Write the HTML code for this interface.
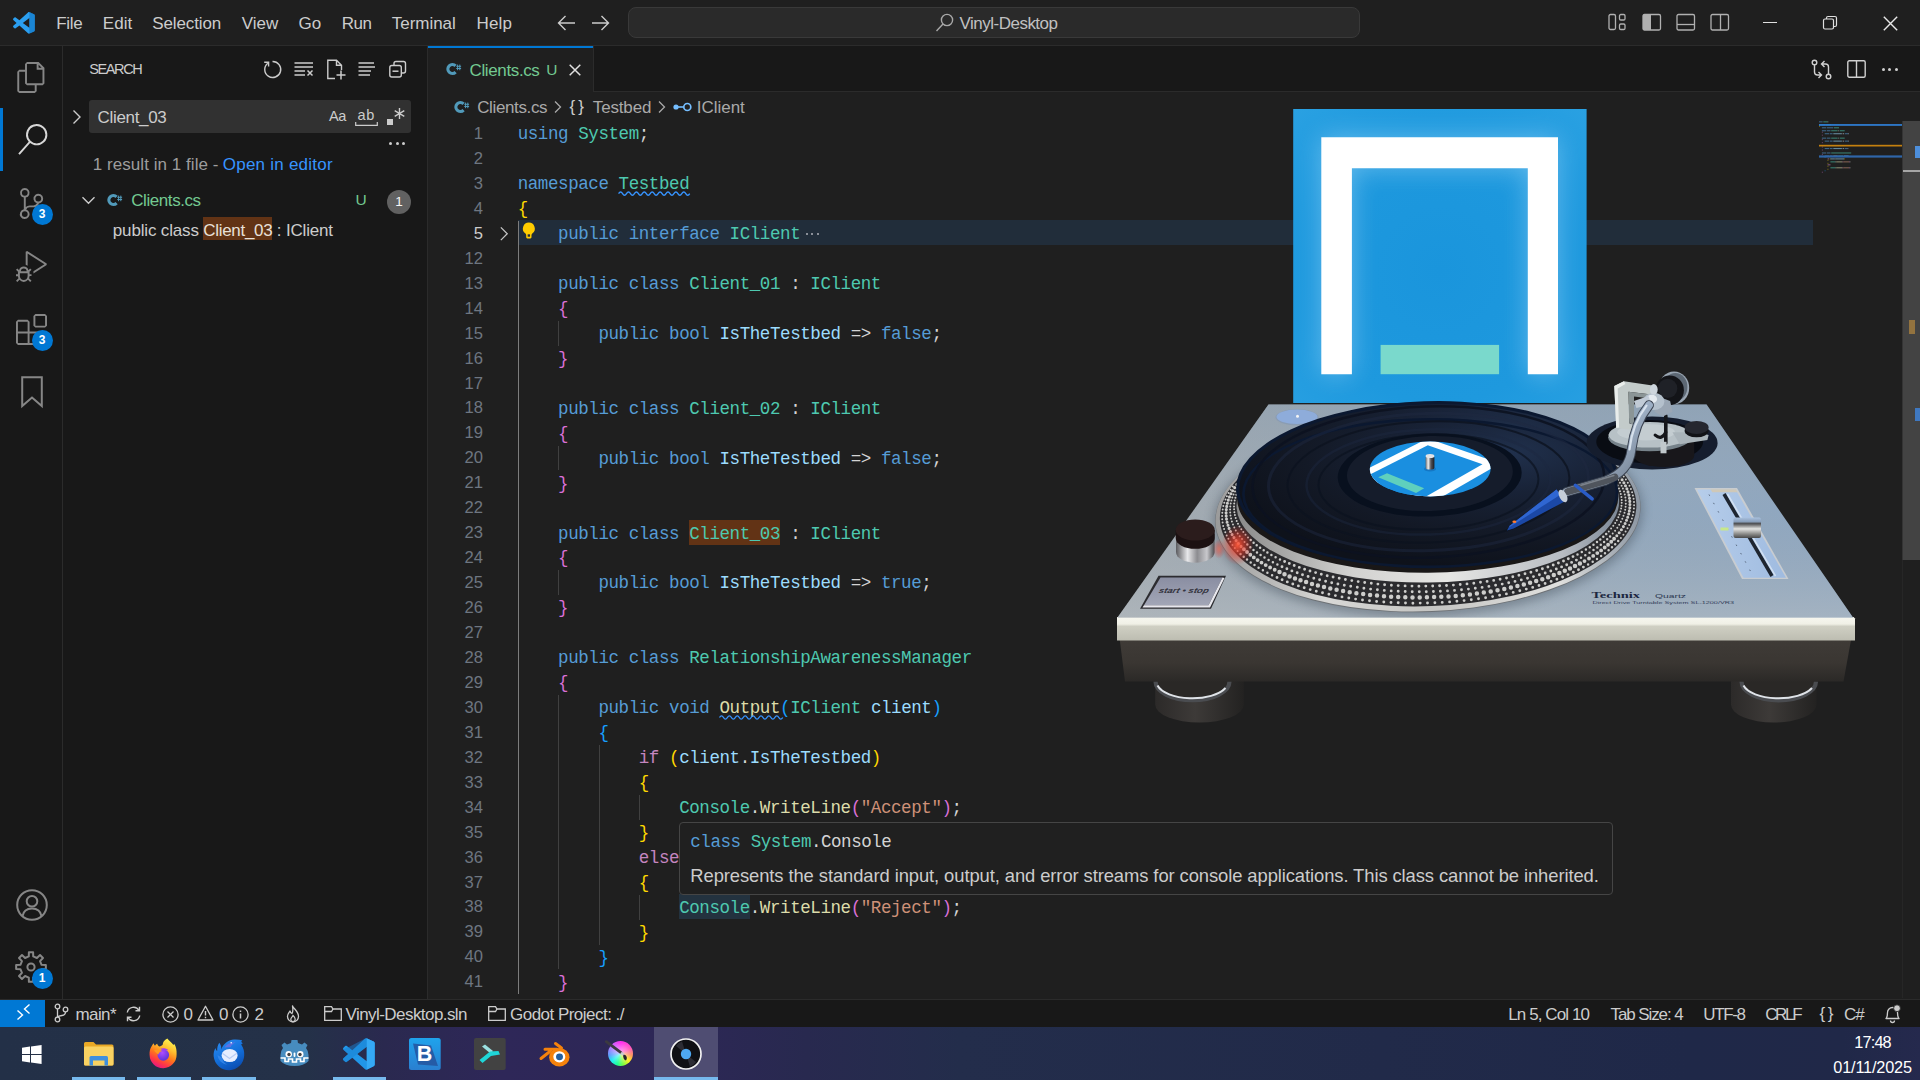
<!DOCTYPE html>
<html><head><meta charset="utf-8"><title>Clients.cs - Vinyl-Desktop</title>
<style>
html,body{margin:0;padding:0;width:1920px;height:1080px;overflow:hidden;background:#1f1f1f;font-family:"Liberation Sans",sans-serif;color:#cccccc;}
.a{position:absolute;}
.t{position:absolute;white-space:pre;line-height:1;}
svg{position:absolute;overflow:visible;}
.cl{position:absolute;left:0;white-space:pre;font-family:"Liberation Mono",monospace;font-size:17.5px;line-height:25px;height:25px;letter-spacing:-0.412px;color:#d4d4d4;}
.ln{position:absolute;left:440px;width:43px;text-align:right;font-size:16.6px;line-height:25px;height:25px;color:#6e7681;}
.k{color:#569cd6}.c{color:#c586c0}.y{color:#4ec9b0}.f{color:#dcdcaa}.v{color:#9cdcfe}.s{color:#ce9178}
.b1{color:#ffd700}.b2{color:#da70d6}.b3{color:#179fff}

</style></head>
<body>
<div class="a" style="left:0px;top:0px;width:1920px;height:46px;background:#1f1f1f;"></div>
<div class="a" style="left:0px;top:45px;width:1920px;height:1px;background:#2b2b2b;"></div>
<div class="a" style="left:0px;top:46px;width:63px;height:953px;background:#181818;"></div>
<div class="a" style="left:62px;top:46px;width:1px;height:953px;background:#2b2b2b;"></div>
<div class="a" style="left:63px;top:46px;width:365px;height:953px;background:#181818;"></div>
<div class="a" style="left:427px;top:46px;width:1px;height:953px;background:#2b2b2b;"></div>
<div class="a" style="left:428px;top:46px;width:1492px;height:45px;background:#181818;"></div>
<div class="a" style="left:428px;top:91px;width:1492px;height:1px;background:#2b2b2b;"></div>
<div class="a" style="left:428px;top:46px;width:165px;height:46px;background:#1f1f1f;"></div>
<div class="a" style="left:428px;top:46px;width:165px;height:1.5px;background:#0078d4;"></div>
<div class="a" style="left:593px;top:46px;width:1px;height:46px;background:#2b2b2b;"></div>
<svg class="a" style="left:12.6px;top:11.6px" width="21.8" height="21.8" viewBox="0 0 100 100" ><path fill-rule="evenodd" fill="#2b9ff0" d="M96.5 10.8 75.9.9C73.5-.3 70.7.2 68.8 2.1L29.4 38 12.2 25c-1.6-1.2-3.8-1.1-5.3.2l-5.5 5c-1.8 1.7-1.8 4.5 0 6.200L16.300 50 1.400 63.600c-1.800 1.700-1.800 4.500 0 6.200l5.500 5c1.500 1.300 3.700 1.400 5.300.200L29.400 62l39.400 35.900c1.900 1.900 4.700 2.400 7.100 1.200l20.600-9.900c2.100-1 3.500-3.200 3.500-5.600V16.400c0-2.400-1.400-4.600-3.500-5.600ZM75 72.700 45.100 50 75 27.300Z"/><path fill="#0d6fbd" opacity=".55" d="M75 27.300V0.500c2 0 20 9 21.500 10.300 2.100 1 3.500 3.200 3.500 5.600v67.200c0 2.400-1.400 4.600-3.500 5.600L75.900 99.100c-.3.150-.6.250-.9.350Z"/></svg>
<svg class="a" style="left:556.5px;top:14px" width="20" height="18" viewBox="0 0 20 18" ><path d="M1.500 9H18M8.500 2 1.500 9l7 7" fill="none" stroke="#cccccc" stroke-width="1.400"/></svg>
<svg class="a" style="left:590px;top:14px" width="20" height="18" viewBox="0 0 20 18" ><path d="M2 9H18.500M11.500 2l7 7-7 7" fill="none" stroke="#cccccc" stroke-width="1.400"/></svg>
<div class="a" style="left:628px;top:7px;width:729.500px;height:28.800px;background:#2a2a2a;border:1.200px solid #393939;border-radius:8px"></div>
<svg class="a" style="left:935px;top:12px" width="20" height="20" viewBox="0 0 20 20" ><circle cx="12" cy="8" r="5.600" fill="none" stroke="#a8a8a8" stroke-width="1.400"/><path d="M8 12 1.500 19" stroke="#a8a8a8" stroke-width="1.400"/></svg>
<svg class="a" style="left:1608px;top:12.2px" width="20" height="20" viewBox="0 0 20 20" ><rect x="1" y="2.500" width="6.500" height="15" rx="1.500" fill="none" stroke="#b0b0b0" stroke-width="1.300"/><rect x="11.500" y="2.500" width="5.500" height="5.500" rx="1.300" fill="none" stroke="#b0b0b0" stroke-width="1.300"/><rect x="11.500" y="12" width="5.500" height="5.500" rx="1.300" fill="none" stroke="#b0b0b0" stroke-width="1.300"/></svg>
<svg class="a" style="left:1642px;top:12.2px" width="20" height="20" viewBox="0 0 20 20" ><rect x="1" y="2.500" width="17.500" height="15.500" rx="1.500" fill="none" stroke="#b0b0b0" stroke-width="1.300"/><rect x="1" y="2.500" width="8" height="15.500" fill="#b0b0b0"/></svg>
<svg class="a" style="left:1676px;top:12.2px" width="20" height="20" viewBox="0 0 20 20" ><rect x="1" y="2.500" width="17.500" height="15.500" rx="1.500" fill="none" stroke="#b0b0b0" stroke-width="1.300"/><path d="M1 12.500H18.500" stroke="#b0b0b0" stroke-width="1.300"/></svg>
<svg class="a" style="left:1710px;top:12.2px" width="20" height="20" viewBox="0 0 20 20" ><rect x="1" y="2.500" width="17.500" height="15.500" rx="1.500" fill="none" stroke="#b0b0b0" stroke-width="1.300"/><path d="M10.500 2.500V18" stroke="#b0b0b0" stroke-width="1.300"/></svg>
<div class="a" style="left:1763px;top:22px;width:14px;height:1.3px;background:#e0e0e0;"></div>
<svg class="a" style="left:1822px;top:15px" width="16" height="16" viewBox="0 0 16 16" ><rect x="1.500" y="4" width="10" height="10" rx="1.500" fill="none" stroke="#e0e0e0" stroke-width="1.200"/><path d="M4.500 4V3q0-1.500 1.500-1.500h7q1.500 0 1.500 1.500v7q0 1.500-1.500 1.500h-1" fill="none" stroke="#e0e0e0" stroke-width="1.200"/></svg>
<svg class="a" style="left:1882.5px;top:15.5px" width="15" height="15" viewBox="0 0 15 15" ><path d="M.8.8 14.200 14.200M14.200.8.8 14.200" stroke="#e8e8e8" stroke-width="1.400"/></svg>
<svg class="a" style="left:16.0px;top:61.5px" width="31" height="31" viewBox="0 0 24 24" ><path fill="#868686" d="M17.5 0h-9L7 1.500V6H2.500L1 7.500v15.070L2.500 24h12.070L16 22.570V18h4.700l1.300-1.430V4.500L17.500 0zm0 2.120l2.380 2.380H17.500V2.120zm-3 20.380h-12v-15H7v9.070L8.500 18h6v4.500zm6-6h-12v-15H16V6h4.500v10.500z"/></svg>
<div class="a" style="left:0px;top:108px;width:2.6px;height:63px;background:#0078d4;"></div>
<svg class="a" style="left:16.5px;top:124.0px" width="31" height="31" viewBox="0 0 24 24" ><path fill="#d7d7d7" d="M15.250 0a8.250 8.250 0 0 0-6.180 13.720L1 22.880l1.120 1 8.050-9.120A8.251 8.251 0 1 0 15.250.010V0zm0 15a6.750 6.750 0 1 1 0-13.500 6.750 6.750 0 0 1 0 13.500z"/></svg>
<svg class="a" style="left:16.0px;top:187.5px" width="31" height="31" viewBox="0 0 24 24" ><path fill="#868686" d="M21.007 8.222A3.738 3.738 0 0 0 15.045 5.200a3.737 3.737 0 0 0 1.156 6.583 2.988 2.988 0 0 1-2.668 1.670h-2.990a4.456 4.456 0 0 0-2.989 1.165V7.400a3.737 3.737 0 1 0-1.494 0v9.117a3.776 3.776 0 1 0 1.816.099 2.990 2.990 0 0 1 2.668-1.667h2.990a4.484 4.484 0 0 0 4.223-3.039 3.736 3.736 0 0 0 3.250-3.687zM4.565 3.738a2.242 2.242 0 1 1 4.484 0 2.242 2.242 0 0 1-4.484 0zm4.484 16.441a2.242 2.242 0 1 1-4.484 0 2.242 2.242 0 0 1 4.484 0zm8.221-9.715a2.242 2.242 0 1 1 0-4.485 2.242 2.242 0 0 1 0 4.485z"/></svg>
<svg class="a" style="left:16.0px;top:250.5px" width="31" height="31" viewBox="0 0 24 24" ><path fill="#868686" d="M10.940 13.500l-1.320 1.320a3.730 3.730 0 0 0-7.240 0L1.060 13.500 0 14.560l1.720 1.720-.220.220V18H0v1.500h1.500v.080c.077.489.214.966.410 1.420L0 22.940 1.060 24l1.650-1.650A4.308 4.308 0 0 0 6 24a4.310 4.310 0 0 0 3.290-1.650L10.940 24 12 22.940 10.090 21c.198-.464.336-.951.410-1.450v-.100H12V18h-1.500v-1.500l-.220-.220L12 14.560l-1.060-1.060zM6 13.500a2.250 2.250 0 0 1 2.250 2.250h-4.500A2.250 2.250 0 0 1 6 13.500zm3 6a3.330 3.330 0 0 1-3 3 3.330 3.330 0 0 1-3-3v-2.250h6v2.250zm14.760-9.900v1.260L13.500 17.370V15.600l8.500-5.370L9 2v9.460a5.070 5.070 0 0 0-1.500-.720V.630L8.640 0l15.120 9.600z"/></svg>
<svg class="a" style="left:16.0px;top:314.0px" width="31" height="31" viewBox="0 0 24 24" ><path fill="#868686" d="M13.500 1.500L15 0h7.500L24 1.500V9l-1.500 1.500H15L13.500 9V1.500zm1.500 0V9h7.500V1.500H15zM0 15V6l1.500-1.500H9L10.500 6v7.500H18l1.500 1.500v7.500L18 24H1.500L0 22.500V15zm9-1.500V6H1.500v7.500H9zM9 15H1.500v7.500H9V15zm1.500 7.500H18V15h-7.500v7.500z"/></svg>
<svg class="a" style="left:20.5px;top:376px" width="22" height="32" viewBox="0 0 22 32" ><path d="M1.200 1.200H20.800V30L11 21.500 1.200 30Z" fill="none" stroke="#868686" stroke-width="2" stroke-linejoin="miter"/></svg>
<div class="a" style="left:31.5px;top:203.5px;width:21.0px;height:21.0px;border-radius:50%;background:#0078d4;color:#fff;font-size:12px;font-weight:700;text-align:center;line-height:21.0px">3</div>
<div class="a" style="left:31.5px;top:329.5px;width:21.0px;height:21.0px;border-radius:50%;background:#0078d4;color:#fff;font-size:12px;font-weight:700;text-align:center;line-height:21.0px">3</div>
<svg class="a" style="left:15.5px;top:888.5px" width="32" height="32" viewBox="0 0 32 32" ><circle cx="16" cy="16" r="14.800" fill="none" stroke="#868686" stroke-width="2"/><circle cx="16" cy="12.300" r="5.300" fill="none" stroke="#868686" stroke-width="2"/><path d="M6.500 27.200C7.500 21.500 11 19.500 16 19.500S24.500 21.500 25.500 27.200" fill="none" stroke="#868686" stroke-width="2"/></svg>
<svg class="a" style="left:15px;top:951px" width="32" height="32" viewBox="0 0 32 32" ><path d="M13.79 5.43L13.90 1.15L18.10 1.15L18.21 5.43L21.91 6.96L25.02 4.02L27.98 6.98L25.04 10.09L26.57 13.79L30.85 13.90L30.85 18.10L26.57 18.21L25.04 21.91L27.98 25.02L25.02 27.98L21.91 25.04L18.21 26.57L18.10 30.85L13.90 30.85L13.79 26.57L10.09 25.04L6.98 27.98L4.02 25.02L6.96 21.91L5.43 18.21L1.15 18.10L1.15 13.90L5.43 13.79L6.96 10.09L4.02 6.98L6.98 4.02L10.09 6.96Z" fill="none" stroke="#868686" stroke-width="2" stroke-linejoin="round"/><circle cx="16" cy="16" r="3.600" fill="none" stroke="#868686" stroke-width="2"/></svg>
<div class="a" style="left:31.5px;top:967.5px;width:21.0px;height:21.0px;border-radius:50%;background:#0078d4;color:#fff;font-size:12px;font-weight:700;text-align:center;line-height:21.0px">1</div>
<svg class="a" style="left:262px;top:59px" width="21" height="21" viewBox="0 0 21 21" ><path d="M5.800 4.200A8 8 0 1 0 10.500 2.500" fill="none" stroke="#cccccc" stroke-width="1.400"/><path d="M2.200 3.200H6.600V7.600" fill="none" stroke="#cccccc" stroke-width="1.400"/></svg>
<svg class="a" style="left:293px;top:59px" width="21" height="21" viewBox="0 0 21 21" ><path d="M1.500 4H20M1.500 8H20M1.500 12H12M1.500 16H12" stroke="#cccccc" stroke-width="1.500"/><path d="M14.500 11.500 19.500 16.500M19.500 11.500 14.500 16.500" stroke="#cccccc" stroke-width="1.500"/></svg>
<svg class="a" style="left:326px;top:59px" width="21" height="21" viewBox="0 0 21 21" ><path d="M9 19.500H1.800V1.200H10.500L15.500 6.200V11M10.500 1.200V6.200H15.500" fill="none" stroke="#cccccc" stroke-width="1.400"/><path d="M10.500 16H19.500M15 11.500V20.500" stroke="#cccccc" stroke-width="1.500"/></svg>
<svg class="a" style="left:357px;top:59px" width="21" height="21" viewBox="0 0 21 21" ><path d="M1.500 4H17M1.500 8H18M1.500 12H14M1.500 16H13" stroke="#cccccc" stroke-width="1.500"/></svg>
<svg class="a" style="left:388px;top:59px" width="21" height="21" viewBox="0 0 21 21" ><rect x="1.800" y="6.500" width="11.500" height="11.500" rx="2" fill="none" stroke="#cccccc" stroke-width="1.400"/><path d="M6 6.500V4.500q0-2 2-2h7.500q2 0 2 2v7.500q0 2-2 2H13.500" fill="none" stroke="#cccccc" stroke-width="1.400"/><path d="M4.500 12.200H10.500" stroke="#cccccc" stroke-width="1.500"/></svg>
<svg class="a" style="left:71px;top:108px" width="12" height="18" viewBox="0 0 12 18" ><path d="M2.500 2.500 9 9 2.500 15.500" fill="none" stroke="#cccccc" stroke-width="1.400"/></svg>
<div class="a" style="left:89px;top:100px;width:322px;height:33px;background:#313131;border-radius:3px"></div>
<svg class="a" style="left:355px;top:121.5px" width="23" height="4" viewBox="0 0 23 4" ><path d="M.7 0V3.300H22.300V0" fill="none" stroke="#cccccc" stroke-width="1.200"/></svg>
<div class="a" style="left:387px;top:119px;width:5.5px;height:5.5px;background:#cccccc;"></div>
<svg class="a" style="left:393.5px;top:108px" width="11" height="11" viewBox="0 0 11 11" ><path d="M5.500 0V11M.700 2.700 10.300 8.300M10.300 2.700.700 8.300" stroke="#cccccc" stroke-width="1.400"/></svg>
<div class="a" style="left:389.1px;top:141.7px;width:3px;height:3px;border-radius:50%;background:#cccccc"></div>
<div class="a" style="left:395.5px;top:141.7px;width:3px;height:3px;border-radius:50%;background:#cccccc"></div>
<div class="a" style="left:402.0px;top:141.7px;width:3px;height:3px;border-radius:50%;background:#cccccc"></div>
<svg class="a" style="left:81px;top:193px" width="15" height="15" viewBox="0 0 15 15" ><path d="M1.500 4.200 7.500 10.200 13.500 4.200" fill="none" stroke="#cccccc" stroke-width="1.400"/></svg>
<svg class="a" style="left:107.2px;top:192.5px" width="15.500" height="14" viewBox="0 0 15.500 14"><path d="M9.600 3.900A4.500 4.500 0 1 0 9.600 10.100" fill="none" stroke="#519aba" stroke-width="3.100"/><path d="M11.600 2.600v5.600M13.800 2.600v5.600M10.300 4.300h4.800M10.300 6.500h4.800" stroke="#519aba" stroke-width="1"/></svg>
<div class="a" style="left:387px;top:189.500px;width:24px;height:24px;border-radius:50%;background:#616161;color:#f8f8f8;font-size:13.500px;text-align:center;line-height:24px">1</div>
<div class="a" style="left:203.3px;top:217px;width:69px;height:23px;background:#623315;"></div>
<svg class="a" style="left:445.7px;top:62.3px" width="15.500" height="14" viewBox="0 0 15.500 14"><path d="M9.600 3.900A4.500 4.500 0 1 0 9.600 10.100" fill="none" stroke="#519aba" stroke-width="3.100"/><path d="M11.600 2.600v5.600M13.800 2.600v5.600M10.300 4.300h4.800M10.300 6.500h4.800" stroke="#519aba" stroke-width="1"/></svg>
<svg class="a" style="left:569px;top:63.5px" width="12" height="12" viewBox="0 0 12 12" ><path d="M.7.7 11.300 11.300M11.300.7.7 11.300" stroke="#e0e0e0" stroke-width="1.500"/></svg>
<svg class="a" style="left:1811px;top:58px" width="22" height="22" viewBox="0 0 22 22" ><circle cx="3.500" cy="4.500" r="2.300" fill="none" stroke="#d0d0d0" stroke-width="1.400"/><circle cx="17.500" cy="18.500" r="2.300" fill="none" stroke="#d0d0d0" stroke-width="1.400"/><path d="M3.500 7V14q0 3 3 3H10M7.500 14 10.500 17 7.500 20M17.500 16V9q0-3-3-3H11M13.500 3 10.500 6 13.500 9" fill="none" stroke="#d0d0d0" stroke-width="1.400"/></svg>
<svg class="a" style="left:1847px;top:60px" width="19" height="18" viewBox="0 0 19 18" ><rect x=".8" y=".8" width="17.400" height="16.400" rx="1.500" fill="none" stroke="#d0d0d0" stroke-width="1.400"/><path d="M9.500 .8V17.200" stroke="#d0d0d0" stroke-width="1.400"/></svg>
<div class="a" style="left:1881.5px;top:67.5px;width:3px;height:3px;border-radius:50%;background:#d0d0d0"></div>
<div class="a" style="left:1888.2px;top:67.5px;width:3px;height:3px;border-radius:50%;background:#d0d0d0"></div>
<div class="a" style="left:1894.8px;top:67.5px;width:3px;height:3px;border-radius:50%;background:#d0d0d0"></div>
<svg class="a" style="left:454.2px;top:99.5px" width="15.500" height="14" viewBox="0 0 15.500 14"><path d="M9.600 3.900A4.500 4.500 0 1 0 9.600 10.100" fill="none" stroke="#519aba" stroke-width="3.100"/><path d="M11.600 2.600v5.600M13.800 2.600v5.600M10.300 4.300h4.800M10.300 6.500h4.800" stroke="#519aba" stroke-width="1"/></svg>
<svg class="a" style="left:553px;top:100px" width="10" height="14" viewBox="0 0 10 14" ><path d="M2 1.500 7.500 7 2 12.500" fill="none" stroke="#a9a9a9" stroke-width="1.300"/></svg>
<svg class="a" style="left:657px;top:100px" width="10" height="14" viewBox="0 0 10 14" ><path d="M2 1.500 7.500 7 2 12.500" fill="none" stroke="#a9a9a9" stroke-width="1.300"/></svg>
<svg class="a" style="left:673px;top:100.5px" width="19" height="12" viewBox="0 0 19 12" ><circle cx="3" cy="6" r="2.600" fill="#75beff"/><path d="M5 6H11" stroke="#75beff" stroke-width="1.600"/><circle cx="14.300" cy="6" r="3.500" fill="none" stroke="#75beff" stroke-width="1.700"/></svg>
<div class="a" style="left:518px;top:220.1px;width:1295px;height:25.2px;background:#212d3a;"></div>
<div class="a" style="left:689.23px;top:520.2px;width:90.81px;height:25px;background:#623315;"></div>
<div class="a" style="left:679.1400000000001px;top:894.4499999999999px;width:70.63px;height:25px;background:#23323f;"></div>
<div class="a" style="left:517.9px;top:221.1px;width:1.6px;height:773.4px;background:#7c7c7c;"></div>
<div class="a" style="left:558.3px;top:320.9px;width:1px;height:24.9px;background:#404040;"></div>
<div class="a" style="left:558.3px;top:445.6px;width:1px;height:24.9px;background:#404040;"></div>
<div class="a" style="left:558.3px;top:570.4px;width:1px;height:24.9px;background:#404040;"></div>
<div class="a" style="left:558.3px;top:695.1px;width:1px;height:274.4px;background:#404040;"></div>
<div class="a" style="left:598.6px;top:745.0px;width:1px;height:199.6px;background:#404040;"></div>
<div class="a" style="left:639.0px;top:794.9px;width:1px;height:24.9px;background:#404040;"></div>
<div class="a" style="left:639.0px;top:894.7px;width:1px;height:24.9px;background:#404040;"></div>
<div class="ln" style="top:121.00px;">1</div>
<div class="cl" style="left:517.7px;top:122.30px"><span class="k">using</span> <span class="y">System</span>;</div>
<div class="ln" style="top:145.95px;">2</div>
<div class="ln" style="top:170.90px;">3</div>
<div class="cl" style="left:517.7px;top:172.20px"><span class="k">namespace</span> <span class="y">Testbed</span></div>
<div class="ln" style="top:195.85px;">4</div>
<div class="cl" style="left:517.7px;top:197.15px"><span class="b1">{</span></div>
<div class="ln" style="top:220.80px;color:#cccccc;">5</div>
<div class="cl" style="left:517.7px;top:222.10px">    <span class="k">public</span> <span class="k">interface</span> <span class="y">IClient</span></div>
<div class="ln" style="top:245.75px;">12</div>
<div class="ln" style="top:270.70px;">13</div>
<div class="cl" style="left:517.7px;top:272.00px">    <span class="k">public</span> <span class="k">class</span> <span class="y">Client_01</span> : <span class="y">IClient</span></div>
<div class="ln" style="top:295.65px;">14</div>
<div class="cl" style="left:517.7px;top:296.95px">    <span class="b2">{</span></div>
<div class="ln" style="top:320.60px;">15</div>
<div class="cl" style="left:517.7px;top:321.90px">        <span class="k">public</span> <span class="k">bool</span> <span class="v">IsTheTestbed</span> =&gt; <span class="k">false</span>;</div>
<div class="ln" style="top:345.55px;">16</div>
<div class="cl" style="left:517.7px;top:346.85px">    <span class="b2">}</span></div>
<div class="ln" style="top:370.50px;">17</div>
<div class="ln" style="top:395.45px;">18</div>
<div class="cl" style="left:517.7px;top:396.75px">    <span class="k">public</span> <span class="k">class</span> <span class="y">Client_02</span> : <span class="y">IClient</span></div>
<div class="ln" style="top:420.40px;">19</div>
<div class="cl" style="left:517.7px;top:421.70px">    <span class="b2">{</span></div>
<div class="ln" style="top:445.35px;">20</div>
<div class="cl" style="left:517.7px;top:446.65px">        <span class="k">public</span> <span class="k">bool</span> <span class="v">IsTheTestbed</span> =&gt; <span class="k">false</span>;</div>
<div class="ln" style="top:470.30px;">21</div>
<div class="cl" style="left:517.7px;top:471.60px">    <span class="b2">}</span></div>
<div class="ln" style="top:495.25px;">22</div>
<div class="ln" style="top:520.20px;">23</div>
<div class="cl" style="left:517.7px;top:521.50px">    <span class="k">public</span> <span class="k">class</span> <span class="y">Client_03</span> : <span class="y">IClient</span></div>
<div class="ln" style="top:545.15px;">24</div>
<div class="cl" style="left:517.7px;top:546.45px">    <span class="b2">{</span></div>
<div class="ln" style="top:570.10px;">25</div>
<div class="cl" style="left:517.7px;top:571.40px">        <span class="k">public</span> <span class="k">bool</span> <span class="v">IsTheTestbed</span> =&gt; <span class="k">true</span>;</div>
<div class="ln" style="top:595.05px;">26</div>
<div class="cl" style="left:517.7px;top:596.35px">    <span class="b2">}</span></div>
<div class="ln" style="top:620.00px;">27</div>
<div class="ln" style="top:644.95px;">28</div>
<div class="cl" style="left:517.7px;top:646.25px">    <span class="k">public</span> <span class="k">class</span> <span class="y">RelationshipAwarenessManager</span></div>
<div class="ln" style="top:669.90px;">29</div>
<div class="cl" style="left:517.7px;top:671.20px">    <span class="b2">{</span></div>
<div class="ln" style="top:694.85px;">30</div>
<div class="cl" style="left:517.7px;top:696.15px">        <span class="k">public</span> <span class="k">void</span> <span class="f">Output</span><span class="b3">(</span><span class="y">IClient</span> <span class="v">client</span><span class="b3">)</span></div>
<div class="ln" style="top:719.80px;">31</div>
<div class="cl" style="left:517.7px;top:721.10px">        <span class="b3">{</span></div>
<div class="ln" style="top:744.75px;">32</div>
<div class="cl" style="left:517.7px;top:746.05px">            <span class="c">if</span> <span class="b1">(</span><span class="v">client</span>.<span class="v">IsTheTestbed</span><span class="b1">)</span></div>
<div class="ln" style="top:769.70px;">33</div>
<div class="cl" style="left:517.7px;top:771.00px">            <span class="b1">{</span></div>
<div class="ln" style="top:794.65px;">34</div>
<div class="cl" style="left:517.7px;top:795.95px">                <span class="y">Console</span>.<span class="f">WriteLine</span><span class="b2">(</span><span class="s">&quot;Accept&quot;</span><span class="b2">)</span>;</div>
<div class="ln" style="top:819.60px;">35</div>
<div class="cl" style="left:517.7px;top:820.90px">            <span class="b1">}</span></div>
<div class="ln" style="top:844.55px;">36</div>
<div class="cl" style="left:517.7px;top:845.85px">            <span class="c">else</span></div>
<div class="ln" style="top:869.50px;">37</div>
<div class="cl" style="left:517.7px;top:870.80px">            <span class="b1">{</span></div>
<div class="ln" style="top:894.45px;">38</div>
<div class="cl" style="left:517.7px;top:895.75px">                <span class="y">Console</span>.<span class="f">WriteLine</span><span class="b2">(</span><span class="s">&quot;Reject&quot;</span><span class="b2">)</span>;</div>
<div class="ln" style="top:919.40px;">39</div>
<div class="cl" style="left:517.7px;top:920.70px">            <span class="b1">}</span></div>
<div class="ln" style="top:944.35px;">40</div>
<div class="cl" style="left:517.7px;top:945.65px">        <span class="b3">}</span></div>
<div class="ln" style="top:969.30px;">41</div>
<div class="cl" style="left:517.7px;top:970.60px">    <span class="b2">}</span></div>
<svg class="a" style="left:498.5px;top:226px" width="11" height="15.5" viewBox="0 0 12 17" ><path d="M2 1.500 9 8.500 2 15.500" fill="none" stroke="#c5c5c5" stroke-width="1.400"/></svg>
<svg class="a" style="left:522px;top:222px" width="13.7" height="17" viewBox="0 0 15 18" ><path d="M7.500 .3a6.600 6.600 0 0 0-4 11.800c.8.700 1.100 1.300 1.100 2.200v2.200q0 1.200 1.200 1.200h3.400q1.200 0 1.200-1.200v-2.200c0-.9.300-1.500 1.100-2.200a6.600 6.600 0 0 0-4-11.800z" fill="#ffcc00"/><rect x="6.200" y="13.200" width="2.600" height="2.600" fill="#212d3a"/></svg>
<div class="a" style="left:805.5px;top:233px;width:2px;height:2px;background:#8a8f98"></div>
<div class="a" style="left:811px;top:233px;width:2px;height:2px;background:#8a8f98"></div>
<div class="a" style="left:816.5px;top:233px;width:2px;height:2px;background:#8a8f98"></div>
<svg class="a" style="left:0;top:0" width="1920" height="1080"><path d="M618.6 193.6Q620.6 190.4 622.6 193.6Q624.5 196.8 626.5 193.6Q628.5 190.4 630.5 193.6Q632.4 196.8 634.4 193.6Q636.4 190.4 638.4 193.6Q640.3 196.8 642.3 193.6Q644.3 190.4 646.3 193.6Q648.2 196.8 650.2 193.6Q652.2 190.4 654.2 193.6Q656.1 196.8 658.1 193.6Q660.1 190.4 662.1 193.6Q664.0 196.8 666.0 193.6Q668.0 190.4 670.0 193.6Q671.9 196.8 673.9 193.6Q675.9 190.4 677.9 193.6Q679.8 196.8 681.8 193.6Q683.8 190.4 685.8 193.6Q687.7 196.8 689.7 193.6" fill="none" stroke="#3794ff" stroke-width="1.400"/></svg>
<svg class="a" style="left:0;top:0" width="1920" height="1080"><path d="M719.5 717.5Q721.5 714.3 723.5 717.5Q725.4 720.8 727.4 717.5Q729.4 714.3 731.4 717.5Q733.3 720.8 735.3 717.5Q737.3 714.3 739.3 717.5Q741.2 720.8 743.2 717.5Q745.2 714.3 747.2 717.5Q749.1 720.8 751.1 717.5Q753.1 714.3 755.1 717.5Q757.0 720.8 759.0 717.5Q761.0 714.3 763.0 717.5Q764.9 720.8 766.9 717.5Q768.9 714.3 770.9 717.5Q772.8 720.8 774.8 717.5Q776.8 714.3 778.8 717.5Q780.7 720.8 782.7 717.5" fill="none" stroke="#3794ff" stroke-width="1.400"/></svg>
<div class="a" style="left:678.500px;top:822px;width:932px;height:70.500px;background:#202020;border:1px solid #454545;border-radius:4px"></div>
<div class="cl" style="left:690.3px;top:829.500px;letter-spacing:-0.450px"><span class="k">class</span> <span class="y">System</span>.Console</div>
<svg class="a" style="left:0;top:0" width="1920" height="1080"><g opacity=".55"><rect x="1819.0" y="121.30" width="3.6" height="1.1" fill="#569cd6"/><rect x="1823.3" y="121.30" width="4.3" height="1.1" fill="#4ec9b0"/><rect x="1827.6" y="121.30" width="0.7" height="1.1" fill="#d4d4d4"/><rect x="1819.0" y="124.26" width="6.4" height="1.1" fill="#569cd6"/><rect x="1826.2" y="124.26" width="5.0" height="1.1" fill="#4ec9b0"/><rect x="1819.0" y="125.75" width="0.7" height="1.1" fill="#ffd700"/><rect x="1821.9" y="127.23" width="4.3" height="1.1" fill="#569cd6"/><rect x="1826.9" y="127.23" width="6.4" height="1.1" fill="#569cd6"/><rect x="1834.0" y="127.23" width="5.0" height="1.1" fill="#4ec9b0"/><rect x="1821.9" y="130.19" width="4.3" height="1.1" fill="#569cd6"/><rect x="1826.9" y="130.19" width="3.6" height="1.1" fill="#569cd6"/><rect x="1831.2" y="130.19" width="6.4" height="1.1" fill="#4ec9b0"/><rect x="1838.3" y="130.19" width="0.7" height="1.1" fill="#d4d4d4"/><rect x="1839.7" y="130.19" width="5.0" height="1.1" fill="#4ec9b0"/><rect x="1821.9" y="131.67" width="0.7" height="1.1" fill="#da70d6"/><rect x="1824.7" y="133.16" width="4.3" height="1.1" fill="#569cd6"/><rect x="1829.7" y="133.16" width="2.9" height="1.1" fill="#569cd6"/><rect x="1833.3" y="133.16" width="8.6" height="1.1" fill="#9cdcfe"/><rect x="1842.6" y="133.16" width="1.4" height="1.1" fill="#d4d4d4"/><rect x="1844.7" y="133.16" width="3.6" height="1.1" fill="#569cd6"/><rect x="1848.3" y="133.16" width="0.7" height="1.1" fill="#d4d4d4"/><rect x="1821.9" y="134.64" width="0.7" height="1.1" fill="#da70d6"/><rect x="1821.9" y="137.60" width="4.3" height="1.1" fill="#569cd6"/><rect x="1826.9" y="137.60" width="3.6" height="1.1" fill="#569cd6"/><rect x="1831.2" y="137.60" width="6.4" height="1.1" fill="#4ec9b0"/><rect x="1838.3" y="137.60" width="0.7" height="1.1" fill="#d4d4d4"/><rect x="1839.7" y="137.60" width="5.0" height="1.1" fill="#4ec9b0"/><rect x="1821.9" y="139.08" width="0.7" height="1.1" fill="#da70d6"/><rect x="1824.7" y="140.57" width="4.3" height="1.1" fill="#569cd6"/><rect x="1829.7" y="140.57" width="2.9" height="1.1" fill="#569cd6"/><rect x="1833.3" y="140.57" width="8.6" height="1.1" fill="#9cdcfe"/><rect x="1842.6" y="140.57" width="1.4" height="1.1" fill="#d4d4d4"/><rect x="1844.7" y="140.57" width="3.6" height="1.1" fill="#569cd6"/><rect x="1848.3" y="140.57" width="0.7" height="1.1" fill="#d4d4d4"/><rect x="1821.9" y="142.05" width="0.7" height="1.1" fill="#da70d6"/><rect x="1821.9" y="145.01" width="4.3" height="1.1" fill="#569cd6"/><rect x="1826.9" y="145.01" width="3.6" height="1.1" fill="#569cd6"/><rect x="1831.2" y="145.01" width="6.4" height="1.1" fill="#4ec9b0"/><rect x="1838.3" y="145.01" width="0.7" height="1.1" fill="#d4d4d4"/><rect x="1839.7" y="145.01" width="5.0" height="1.1" fill="#4ec9b0"/><rect x="1821.9" y="146.49" width="0.7" height="1.1" fill="#da70d6"/><rect x="1824.7" y="147.98" width="4.3" height="1.1" fill="#569cd6"/><rect x="1829.7" y="147.98" width="2.9" height="1.1" fill="#569cd6"/><rect x="1833.3" y="147.98" width="8.6" height="1.1" fill="#9cdcfe"/><rect x="1842.6" y="147.98" width="1.4" height="1.1" fill="#d4d4d4"/><rect x="1844.7" y="147.98" width="2.9" height="1.1" fill="#569cd6"/><rect x="1847.6" y="147.98" width="0.7" height="1.1" fill="#d4d4d4"/><rect x="1821.9" y="149.46" width="0.7" height="1.1" fill="#da70d6"/><rect x="1821.9" y="152.42" width="4.3" height="1.1" fill="#569cd6"/><rect x="1826.9" y="152.42" width="3.6" height="1.1" fill="#569cd6"/><rect x="1831.2" y="152.42" width="20.0" height="1.1" fill="#4ec9b0"/><rect x="1821.9" y="153.90" width="0.7" height="1.1" fill="#da70d6"/><rect x="1824.7" y="155.39" width="4.3" height="1.1" fill="#569cd6"/><rect x="1829.7" y="155.39" width="2.9" height="1.1" fill="#569cd6"/><rect x="1833.3" y="155.39" width="4.3" height="1.1" fill="#dcdcaa"/><rect x="1837.6" y="155.39" width="0.7" height="1.1" fill="#179fff"/><rect x="1838.3" y="155.39" width="5.0" height="1.1" fill="#4ec9b0"/><rect x="1844.0" y="155.39" width="4.3" height="1.1" fill="#9cdcfe"/><rect x="1848.3" y="155.39" width="0.7" height="1.1" fill="#179fff"/><rect x="1824.7" y="156.87" width="0.7" height="1.1" fill="#179fff"/><rect x="1827.6" y="158.35" width="1.4" height="1.1" fill="#c586c0"/><rect x="1829.7" y="158.35" width="0.7" height="1.1" fill="#ffd700"/><rect x="1830.4" y="158.35" width="4.3" height="1.1" fill="#9cdcfe"/><rect x="1834.7" y="158.35" width="0.7" height="1.1" fill="#d4d4d4"/><rect x="1835.4" y="158.35" width="8.6" height="1.1" fill="#9cdcfe"/><rect x="1844.0" y="158.35" width="0.7" height="1.1" fill="#ffd700"/><rect x="1827.6" y="159.83" width="0.7" height="1.1" fill="#ffd700"/><rect x="1830.4" y="161.31" width="5.0" height="1.1" fill="#4ec9b0"/><rect x="1835.4" y="161.31" width="0.7" height="1.1" fill="#d4d4d4"/><rect x="1836.2" y="161.31" width="6.4" height="1.1" fill="#dcdcaa"/><rect x="1842.6" y="161.31" width="0.7" height="1.1" fill="#da70d6"/><rect x="1843.3" y="161.31" width="5.7" height="1.1" fill="#ce9178"/><rect x="1849.0" y="161.31" width="0.7" height="1.1" fill="#da70d6"/><rect x="1849.7" y="161.31" width="0.7" height="1.1" fill="#d4d4d4"/><rect x="1827.6" y="162.80" width="0.7" height="1.1" fill="#ffd700"/><rect x="1827.6" y="164.28" width="2.9" height="1.1" fill="#c586c0"/><rect x="1827.6" y="165.76" width="0.7" height="1.1" fill="#ffd700"/><rect x="1830.4" y="167.24" width="5.0" height="1.1" fill="#4ec9b0"/><rect x="1835.4" y="167.24" width="0.7" height="1.1" fill="#d4d4d4"/><rect x="1836.2" y="167.24" width="6.4" height="1.1" fill="#dcdcaa"/><rect x="1842.6" y="167.24" width="0.7" height="1.1" fill="#da70d6"/><rect x="1843.3" y="167.24" width="5.7" height="1.1" fill="#ce9178"/><rect x="1849.0" y="167.24" width="0.7" height="1.1" fill="#da70d6"/><rect x="1849.7" y="167.24" width="0.7" height="1.1" fill="#d4d4d4"/><rect x="1827.6" y="168.72" width="0.7" height="1.1" fill="#ffd700"/><rect x="1824.7" y="170.21" width="0.7" height="1.1" fill="#179fff"/><rect x="1821.9" y="171.69" width="0.7" height="1.1" fill="#da70d6"/></g><rect x="1819" y="124.1" width="84" height="1.700" fill="#2f7fd6"/><rect x="1819" y="144.8" width="84" height="1.700" fill="#c4800f"/><rect x="1819" y="155.4" width="84" height="2.200" fill="#2f65a8"/></svg>
<div class="a" style="left:1902px;top:121px;width:18px;height:439px;background:#434343;"></div>
<div class="a" style="left:1902px;top:121px;width:1px;height:877px;background:#2b2b2b;opacity:.6"></div>
<div class="a" style="left:1915px;top:145.5px;width:5px;height:12px;background:#4d8fdc;"></div>
<div class="a" style="left:1903px;top:169.7px;width:17px;height:2px;background:#a6a6a6;"></div>
<div class="a" style="left:1908.5px;top:319.5px;width:6.5px;height:14px;background:#93733f;"></div>
<div class="a" style="left:1915px;top:407.5px;width:5px;height:13px;background:#3f78c0;"></div>
<svg class="a" style="left:0;top:0" width="1920" height="1080" viewBox="0 0 1920 1080"><defs>
<radialGradient id="alb" cx="50%" cy="55%" r="75%"><stop offset="0" stop-color="#1a95dc"/><stop offset=".6" stop-color="#1e99de"/><stop offset="1" stop-color="#2aa1e2"/></radialGradient>
<linearGradient id="deck" x1="0" y1="0" x2="1" y2="0"><stop offset="0" stop-color="#a5abb0"/><stop offset=".3" stop-color="#9ba8b4"/><stop offset=".7" stop-color="#92a7bc"/><stop offset="1" stop-color="#8fa7c1"/></linearGradient>
<linearGradient id="deckv" x1="0" y1="0" x2="0" y2="1"><stop offset="0" stop-color="#8fa0b0" stop-opacity=".55"/><stop offset=".5" stop-color="#9aa8b4" stop-opacity="0"/><stop offset="1" stop-color="#b4bcc2" stop-opacity=".55"/></linearGradient>
<linearGradient id="lip" x1="0" y1="0" x2="0" y2="1"><stop offset="0" stop-color="#f7f7f0"/><stop offset=".3" stop-color="#f0f0e6"/><stop offset=".4" stop-color="#cfcfc3"/><stop offset="1" stop-color="#bdbdb1"/></linearGradient>
<linearGradient id="base" x1="0" y1="0" x2="0" y2="1"><stop offset="0" stop-color="#3f3b37"/><stop offset=".55" stop-color="#3a3632"/><stop offset="1" stop-color="#2b2927"/></linearGradient>
<linearGradient id="rim" x1="0" y1="0" x2="1" y2="0"><stop offset="0" stop-color="#9a9a9a"/><stop offset=".25" stop-color="#d8d8d6"/><stop offset=".5" stop-color="#c4c4c2"/><stop offset=".8" stop-color="#e0e0de"/><stop offset="1" stop-color="#8c96a2"/></linearGradient>
<linearGradient id="bev" x1="0" y1="0" x2="1" y2="0"><stop offset="0" stop-color="#8a8a8a"/><stop offset=".3" stop-color="#d2d2d0"/><stop offset=".55" stop-color="#e6e6e4"/><stop offset=".85" stop-color="#b8bcc2"/><stop offset="1" stop-color="#7c8896"/></linearGradient>
<radialGradient id="vin" cx="72%" cy="22%" r="80%"><stop offset="0" stop-color="#20304c"/><stop offset=".35" stop-color="#182236"/><stop offset=".7" stop-color="#131926"/><stop offset="1" stop-color="#0e121b"/></radialGradient>
<radialGradient id="glow" cx="50%" cy="50%" r="50%"><stop offset="0" stop-color="#ff5a3c" stop-opacity=".95"/><stop offset=".45" stop-color="#f03a28" stop-opacity=".55"/><stop offset="1" stop-color="#e02a20" stop-opacity="0"/></radialGradient>
<linearGradient id="metal" x1="0" y1="0" x2="1" y2="0"><stop offset="0" stop-color="#5a5a5e"/><stop offset=".3" stop-color="#e8e8ea"/><stop offset=".55" stop-color="#8c8c90"/><stop offset=".8" stop-color="#c8c8cc"/><stop offset="1" stop-color="#4c4c50"/></linearGradient>
<linearGradient id="arm" x1="0" y1="0" x2="1" y2="1"><stop offset="0" stop-color="#ccd8e6"/><stop offset=".45" stop-color="#a3b5cb"/><stop offset=".8" stop-color="#7c8a9c"/><stop offset="1" stop-color="#50565f"/></linearGradient>
<linearGradient id="foot" x1="0" y1="0" x2="1" y2="0"><stop offset="0" stop-color="#2c2a29"/><stop offset=".45" stop-color="#3d3a38"/><stop offset="1" stop-color="#232221"/></linearGradient>
<linearGradient id="pitch" x1="0" y1="0" x2="1" y2="0"><stop offset="0" stop-color="#b6cdea"/><stop offset="1" stop-color="#9fbbe0"/></linearGradient>
<linearGradient id="spin" x1="0" y1="0" x2="1" y2="0"><stop offset="0" stop-color="#6a6a6c"/><stop offset=".3" stop-color="#f0f0f0"/><stop offset=".6" stop-color="#55555a"/><stop offset="1" stop-color="#1c1c20"/></linearGradient>
<filter id="blur8" x="-20%" y="-20%" width="140%" height="140%"><feGaussianBlur stdDeviation="13"/></filter>
<filter id="blur5" x="-10%" y="-10%" width="120%" height="130%"><feGaussianBlur stdDeviation="5"/></filter>
<linearGradient id="knobv" x1="0" y1="0" x2="0" y2="1"><stop offset="0" stop-color="#a9c0de"/><stop offset=".2" stop-color="#8aa0bc"/><stop offset=".3" stop-color="#4e4e50"/><stop offset=".55" stop-color="#e4e4e2"/><stop offset=".8" stop-color="#8c8c8a"/><stop offset="1" stop-color="#4a4a4a"/></linearGradient>
<linearGradient id="btn" x1="0" y1="0" x2="0" y2="1"><stop offset="0" stop-color="#8a8ea2"/><stop offset="1" stop-color="#a2a6b6"/></linearGradient>
<clipPath id="deckclip"><path d="M1268.500 404.500H1706.500L1853 617.500H1117.500Z"/></clipPath>
<clipPath id="albclip"><rect x="1293.200" y="109" width="293.400" height="294"/></clipPath>
<clipPath id="lblclip"><ellipse cx="1430.200" cy="468.900" rx="60.400" ry="27.500"/></clipPath>
</defs><rect x="1293.200" y="109" width="293.400" height="294" fill="url(#alb)"/><g clip-path="url(#albclip)"><path d="M1321.300 137.200H1558V374.200H1527.800V168.300H1351.900V374.200H1321.300Z" fill="#bfe6ff" opacity=".42" filter="url(#blur8)"/></g><path d="M1321.300 137.200H1558V374.200H1527.800V168.300H1351.900V374.200H1321.300Z" fill="#ffffff"/><rect x="1380.600" y="344.900" width="118.500" height="29.300" fill="#7ad9cc"/><path d="M1155.2 681V704.5A44.299999999999955 18 0 0 0 1243.8 704.500V681Z" fill="url(#foot)"/><path d="M1155.5 681A37.0 18.500 0 0 0 1229.5 681Z" fill="#2a2826"/><path d="M1155.5 681.500A37.0 18.800 0 0 0 1229.5 681.500" fill="none" stroke="#4a4c50" stroke-width="4.200"/><path d="M1157.5 685.500A36.0 17 0 0 0 1225.5 688" fill="none" stroke="#dfe3e8" stroke-width="2"/><path d="M1731 681V704.5A42.75 18 0 0 0 1816.5 704.500V681Z" fill="url(#foot)"/><path d="M1741.5 681A37.25 18.500 0 0 0 1816 681Z" fill="#2a2826"/><path d="M1741.5 681.500A37.25 18.800 0 0 0 1816 681.500" fill="none" stroke="#4a4c50" stroke-width="4.200"/><path d="M1743.5 685.500A36.25 17 0 0 0 1812 688" fill="none" stroke="#dfe3e8" stroke-width="2"/><path d="M1119.800 640H1851L1843.500 681.500H1125Z" fill="url(#base)"/><path d="M1117 617H1853.500L1855 618.500V640.400H1117Z" fill="url(#lip)"/><path d="M1268.500 404.500H1706.500L1853 617.500H1117.500Z" fill="url(#deck)"/><path d="M1268.500 404.500H1706.500L1853 617.500H1117.500Z" fill="url(#deckv)"/><ellipse cx="1297" cy="417.300" rx="21.500" ry="8" fill="#7f95b4" opacity=".55"/><ellipse cx="1297" cy="416.800" rx="20.500" ry="7.300" fill="#8eacda"/><circle cx="1297.500" cy="416.300" r="1.500" fill="#f4f4f4"/><path d="M1158.500 575.800H1226L1211 608.800H1140Z" fill="#2c2c30"/><path d="M1160.500 577.500H1222.500L1208.500 605.300H1144Z" fill="url(#btn)"/><path d="M1144 605.300H1208.500L1222.500 577.500L1224.500 578L1210 607.500H1142.500Z" fill="#e8e8ee"/><text x="1183" y="593.500" font-family="Liberation Sans,sans-serif" font-size="7.600" font-style="italic" font-weight="700" fill="#34343e" text-anchor="middle" textLength="50" lengthAdjust="spacingAndGlyphs" transform="skewX(-18) translate(193,0)">start • stop</text><g clip-path="url(#deckclip)"><ellipse cx="1427.93" cy="516.72" rx="215.52" ry="100.37" transform="rotate(-2.43 1427.93 516.72)" fill="#3c4854" filter="url(#blur5)" opacity=".38"/></g><ellipse cx="1427.93" cy="514.22" rx="212.92" ry="97.77" transform="rotate(-2.43 1427.93 514.22)" fill="#6e7276" /><ellipse cx="1427.93" cy="513.72" rx="212.52" ry="97.37" transform="rotate(-2.43 1427.93 513.72)" fill="url(#rim)" /><ellipse cx="1428.13" cy="511.81" rx="208.38" ry="94.32" transform="rotate(-2.13 1428.13 511.81)" fill="#2b2b2e" /><path d="M1573.0 556.6h0M1568.3 558.8h0M1563.5 561.0h0M1558.4 563.0h0M1553.2 565.0h0M1547.9 567.0h0M1542.4 568.8h0M1536.7 570.5h0M1530.9 572.2h0M1525.0 573.8h0M1518.9 575.3h0M1512.8 576.7h0M1506.5 578.0h0M1500.1 579.2h0M1493.7 580.4h0M1487.1 581.4h0M1480.5 582.3h0M1473.8 583.2h0M1467.0 583.9h0M1460.2 584.5h0M1453.4 585.1h0M1446.5 585.5h0M1439.6 585.8h0M1432.7 586.0h0M1425.8 586.1h0M1418.9 586.2h0M1412.0 586.1h0M1405.1 585.9h0M1398.2 585.6h0M1391.4 585.2h0M1384.6 584.7h0M1377.9 584.1h0M1371.3 583.3h0M1364.7 582.5h0M1358.2 581.6h0M1351.8 580.6h0M1345.4 579.5h0M1339.2 578.3h0M1333.1 577.0h0M1327.2 575.7h0M1321.3 574.2h0M1315.6 572.6h0M1310.0 571.0h0M1304.6 569.2h0M1299.3 567.4h0M1294.2 565.5h0M1289.3 563.5h0M1284.6 561.5h0" stroke="#cdcdcb" stroke-width="2.90" stroke-linecap="round" fill="none"/><path d="M1606.2 534.1h0M1603.3 536.8h0M1600.3 539.5h0M1597.0 542.1h0M1593.5 544.7h0M1589.8 547.2h0M1585.9 549.6h0M1581.8 552.0h0M1577.5 554.4h0M1280.0 559.4h0M1275.6 557.2h0M1271.4 554.9h0M1267.4 552.6h0M1263.7 550.2h0M1260.1 547.8h0M1256.7 545.3h0M1253.6 542.7h0M1250.7 540.1h0" stroke="#cdcdcb" stroke-width="2.49" stroke-linecap="round" fill="none"/><path d="M1621.7 502.8h0M1621.5 505.7h0M1621.1 508.6h0M1620.4 511.5h0M1619.4 514.4h0M1618.3 517.3h0M1616.8 520.2h0M1615.2 523.0h0M1613.3 525.8h0M1611.1 528.6h0M1608.8 531.4h0M1248.0 537.5h0M1245.5 534.8h0M1243.3 532.1h0M1241.3 529.3h0M1239.5 526.5h0M1238.0 523.7h0M1236.7 520.9h0M1235.7 518.0h0M1234.9 515.1h0M1234.4 512.2h0M1234.1 509.3h0M1234.0 506.4h0M1234.2 503.5h0M1234.7 500.6h0M1235.4 497.7h0M1236.3 494.8h0M1237.5 491.9h0M1238.9 489.1h0M1240.6 486.2h0M1242.5 483.4h0M1244.6 480.6h0M1610.2 474.4h0M1612.5 477.2h0M1614.4 479.9h0M1616.2 482.7h0M1617.7 485.5h0M1619.0 488.4h0M1620.0 491.2h0M1620.8 494.1h0M1621.4 497.0h0M1621.7 499.9h0" stroke="#cdcdcb" stroke-width="1.97" stroke-linecap="round" fill="none"/><path d="M1576.4 560.1h0M1571.6 562.4h0M1566.7 564.7h0M1561.6 566.9h0M1556.3 569.0h0M1550.8 571.0h0M1545.2 573.0h0M1539.4 574.8h0M1533.5 576.6h0M1527.5 578.3h0M1521.3 579.9h0M1515.0 581.4h0M1508.7 582.8h0M1502.2 584.1h0M1495.6 585.3h0M1488.9 586.4h0M1482.1 587.4h0M1475.3 588.3h0M1468.4 589.1h0M1461.5 589.8h0M1454.5 590.4h0M1447.5 590.9h0M1440.4 591.3h0M1433.4 591.5h0M1426.3 591.7h0M1419.3 591.7h0M1412.2 591.7h0M1405.2 591.5h0M1398.2 591.2h0M1391.2 590.9h0M1384.3 590.4h0M1377.4 589.8h0M1370.6 589.1h0M1363.9 588.3h0M1357.3 587.3h0M1350.7 586.3h0M1344.3 585.2h0M1337.9 584.0h0M1331.7 582.7h0M1325.6 581.3h0M1319.6 579.8h0M1313.8 578.2h0M1308.1 576.5h0M1302.5 574.7h0M1297.2 572.8h0M1291.9 570.9h0M1286.9 568.8h0M1282.0 566.7h0" stroke="#cdcdcb" stroke-width="2.90" stroke-linecap="round" fill="none"/><path d="M1610.1 536.5h0M1607.2 539.3h0M1604.1 542.1h0M1600.8 544.8h0M1597.3 547.5h0M1593.5 550.1h0M1589.5 552.7h0M1585.3 555.2h0M1581.0 557.7h0M1277.4 564.5h0M1272.9 562.3h0M1268.6 559.9h0M1264.5 557.5h0M1260.6 555.1h0M1257.0 552.5h0M1253.5 550.0h0M1250.3 547.3h0M1247.3 544.6h0" stroke="#cdcdcb" stroke-width="2.49" stroke-linecap="round" fill="none"/><path d="M1625.8 503.7h0M1625.6 506.7h0M1625.2 509.8h0M1624.5 512.8h0M1623.5 515.8h0M1622.3 518.8h0M1620.9 521.8h0M1619.2 524.8h0M1617.3 527.8h0M1615.1 530.7h0M1612.7 533.6h0M1244.5 541.9h0M1242.0 539.1h0M1239.7 536.3h0M1237.7 533.4h0M1235.8 530.5h0M1234.3 527.6h0M1233.0 524.6h0M1231.9 521.6h0M1231.1 518.6h0M1230.5 515.6h0M1230.2 512.6h0M1230.1 509.5h0M1230.3 506.5h0M1230.7 503.5h0M1231.4 500.4h0M1232.3 497.4h0M1233.5 494.4h0M1235.0 491.4h0M1236.6 488.4h0M1238.6 485.4h0M1240.7 482.5h0M1613.9 474.1h0M1616.2 477.0h0M1618.2 479.8h0M1620.0 482.7h0M1621.6 485.7h0M1622.9 488.6h0M1624.0 491.6h0M1624.8 494.6h0M1625.4 497.6h0M1625.7 500.6h0" stroke="#cdcdcb" stroke-width="1.97" stroke-linecap="round" fill="none"/><path d="M1579.9 563.6h0M1575.0 566.1h0M1570.0 568.5h0M1564.8 570.8h0M1559.4 573.0h0M1553.8 575.1h0M1548.1 577.2h0M1542.3 579.2h0M1536.2 581.0h0M1530.1 582.8h0M1523.8 584.5h0M1517.4 586.1h0M1510.9 587.6h0M1504.3 589.0h0M1497.5 590.3h0M1490.7 591.5h0M1483.8 592.6h0M1476.9 593.6h0M1469.9 594.4h0M1462.8 595.2h0M1455.7 595.9h0M1448.5 596.4h0M1441.3 596.8h0M1434.1 597.1h0M1426.9 597.3h0M1419.7 597.4h0M1412.5 597.4h0M1405.3 597.3h0M1398.2 597.0h0M1391.1 596.7h0M1384.0 596.2h0M1377.0 595.6h0M1370.1 594.9h0M1363.2 594.1h0M1356.4 593.2h0M1349.7 592.2h0M1343.1 591.0h0M1336.6 589.8h0M1330.3 588.5h0M1324.0 587.0h0M1317.9 585.5h0M1312.0 583.9h0M1306.1 582.1h0M1300.5 580.3h0M1295.0 578.4h0M1289.6 576.4h0M1284.5 574.3h0M1279.5 572.1h0" stroke="#cdcdcb" stroke-width="4.50" stroke-linecap="round" fill="none"/><path d="M1614.1 538.8h0M1611.2 541.7h0M1608.1 544.7h0M1604.7 547.5h0M1601.1 550.4h0M1597.3 553.1h0M1593.2 555.9h0M1589.0 558.5h0M1584.5 561.1h0M1274.7 569.8h0M1270.1 567.5h0M1265.7 565.1h0M1261.5 562.6h0M1257.6 560.1h0M1253.8 557.4h0M1250.3 554.8h0M1247.0 552.0h0M1243.9 549.2h0" stroke="#cdcdcb" stroke-width="3.87" stroke-linecap="round" fill="none"/><path d="M1629.9 504.5h0M1629.8 507.7h0M1629.3 510.9h0M1628.7 514.0h0M1627.7 517.2h0M1626.5 520.3h0M1625.1 523.5h0M1623.4 526.6h0M1621.4 529.7h0M1619.2 532.7h0M1616.8 535.8h0M1241.0 546.4h0M1238.4 543.5h0M1236.1 540.6h0M1234.0 537.6h0M1232.1 534.6h0M1230.5 531.5h0M1229.1 528.4h0M1228.0 525.3h0M1227.1 522.2h0M1226.5 519.1h0M1226.2 515.9h0M1226.1 512.8h0M1226.3 509.6h0M1226.7 506.4h0M1227.4 503.2h0M1228.3 500.1h0M1229.5 496.9h0M1230.9 493.8h0M1232.6 490.7h0M1234.6 487.6h0M1236.8 484.5h0M1617.6 473.8h0M1619.9 476.7h0M1622.1 479.7h0M1623.9 482.7h0M1625.5 485.8h0M1626.9 488.8h0M1628.0 491.9h0M1628.9 495.1h0M1629.5 498.2h0M1629.8 501.4h0" stroke="#cdcdcb" stroke-width="3.06" stroke-linecap="round" fill="none"/><path d="M1583.4 567.1h0M1578.5 569.7h0M1573.4 572.2h0M1568.0 574.6h0M1562.6 577.0h0M1556.9 579.2h0M1551.1 581.4h0M1545.1 583.5h0M1539.0 585.5h0M1532.7 587.4h0M1526.3 589.1h0M1519.8 590.8h0M1513.2 592.4h0M1506.4 593.9h0M1499.6 595.3h0M1492.6 596.6h0M1485.6 597.8h0M1478.5 598.8h0M1471.3 599.8h0M1464.1 600.6h0M1456.9 601.3h0M1449.6 601.9h0M1442.2 602.4h0M1434.9 602.8h0M1427.5 603.0h0M1420.2 603.1h0M1412.9 603.2h0M1405.5 603.0h0M1398.2 602.8h0M1391.0 602.5h0M1383.8 602.0h0M1376.6 601.5h0M1369.5 600.8h0M1362.5 600.0h0M1355.6 599.1h0M1348.8 598.0h0M1342.0 596.9h0M1335.4 595.6h0M1328.9 594.3h0M1322.5 592.8h0M1316.3 591.2h0M1310.2 589.6h0M1304.2 587.8h0M1298.4 585.9h0M1292.8 584.0h0M1287.3 581.9h0M1282.1 579.7h0M1277.0 577.5h0" stroke="#cdcdcb" stroke-width="2.90" stroke-linecap="round" fill="none"/><path d="M1618.2 541.1h0M1615.2 544.2h0M1612.0 547.2h0M1608.6 550.2h0M1605.0 553.2h0M1601.1 556.1h0M1597.0 558.9h0M1592.7 561.7h0M1588.1 564.4h0M1272.1 575.2h0M1267.4 572.8h0M1262.9 570.3h0M1258.6 567.7h0M1254.5 565.1h0M1250.7 562.4h0M1247.0 559.6h0M1243.7 556.8h0M1240.5 553.9h0" stroke="#cdcdcb" stroke-width="2.49" stroke-linecap="round" fill="none"/><path d="M1634.1 505.3h0M1633.9 508.6h0M1633.5 511.9h0M1632.8 515.2h0M1631.9 518.5h0M1630.7 521.8h0M1629.2 525.1h0M1627.5 528.3h0M1625.6 531.6h0M1623.4 534.8h0M1620.9 537.9h0M1237.6 550.9h0M1234.9 547.9h0M1232.5 544.9h0M1230.3 541.8h0M1228.4 538.7h0M1226.7 535.5h0M1225.3 532.3h0M1224.1 529.1h0M1223.2 525.9h0M1222.6 522.6h0M1222.2 519.3h0M1222.1 516.0h0M1222.3 512.7h0M1222.7 509.4h0M1223.3 506.1h0M1224.3 502.8h0M1225.5 499.5h0M1226.9 496.3h0M1228.6 493.0h0M1230.6 489.8h0M1232.8 486.6h0M1621.3 473.4h0M1623.7 476.4h0M1625.9 479.5h0M1627.8 482.7h0M1629.5 485.8h0M1630.9 489.0h0M1632.1 492.2h0M1632.9 495.5h0M1633.6 498.7h0M1634.0 502.0h0" stroke="#cdcdcb" stroke-width="1.97" stroke-linecap="round" fill="none"/><ellipse cx="1237.500" cy="545" rx="16" ry="20" fill="url(#glow)"/><ellipse cx="1427.82" cy="503.35" rx="191.32" ry="79.22" transform="rotate(-0.76 1427.82 503.35)" fill="url(#bev)" /><ellipse cx="1427.70" cy="497.65" rx="190.61" ry="75.10" transform="rotate(-0.33 1427.70 497.65)" fill="#191717" /><ellipse cx="1427.05" cy="483.64" rx="191.09" ry="82.37" transform="rotate(-1.84 1427.05 483.64)" fill="#0b1830" /><ellipse cx="1427.05" cy="483.64" rx="187.89" ry="79.17" transform="rotate(-1.84 1427.05 483.64)" fill="url(#vin)" /><ellipse cx="1430.20" cy="493.05" rx="188.11" ry="75.10" transform="rotate(-0.33 1430.20 493.05)" fill="#0b1830" /><ellipse cx="1430.20" cy="493.05" rx="185.51" ry="72.50" transform="rotate(-0.33 1430.20 493.05)" fill="url(#vin)" /><g transform="rotate(-1.840 1428 484)"><ellipse cx="1428.500" cy="482" rx="176" ry="75.5" fill="none" stroke="#0c1220" stroke-width="2.5" opacity="0.9"/><ellipse cx="1428.500" cy="482" rx="160" ry="68.5" fill="none" stroke="#1d2840" stroke-width="3" opacity="0.5"/><ellipse cx="1428.500" cy="482" rx="141" ry="60.5" fill="none" stroke="#0d131f" stroke-width="2" opacity="0.8"/><ellipse cx="1428.500" cy="482" rx="122" ry="52.5" fill="none" stroke="#1c2740" stroke-width="2.5" opacity="0.45"/><ellipse cx="1428.500" cy="482" rx="110" ry="47.5" fill="none" stroke="#0c1220" stroke-width="2" opacity="0.7"/></g><ellipse cx="1429.700" cy="475" rx="92" ry="41.500" fill="#08101e" transform="rotate(-1.800 1429.700 475)"/><ellipse cx="1429.900" cy="473.500" rx="83" ry="37.500" fill="#151c2b" transform="rotate(-1.800 1429.900 473.500)"/><ellipse cx="1430.200" cy="468.900" rx="60.400" ry="27.500" fill="#1a8fe0"/><g clip-path="url(#lblclip)"><path d="M1354.700 475.300 1427.700 438.400 1500.100 463.500 1432.900 502.100Z" fill="#ffffff"/><path d="M1427.800 445.200 1482.500 464.200 1411 505.100H1360V479.600Z" fill="#1a8fe0"/><path d="M1378.200 477.300 1387 473.300 1424.200 488.200 1416.100 493Z" fill="#5fd0bd"/></g><ellipse cx="1430" cy="469" rx="6" ry="2.500" fill="#0f5fa8" opacity=".5"/><rect x="1425.600" y="455.500" width="8.800" height="14" rx="2.500" fill="url(#spin)"/><ellipse cx="1430" cy="456" rx="4.400" ry="2" fill="#e4e4e6"/><path d="M1176 534V552A19.300 10.800 0 0 0 1214.600 552V534Z" fill="url(#metal)"/><path d="M1175.700 530V538A19.500 10.800 0 0 0 1214.700 538V530Z" fill="#1c1112"/><ellipse cx="1195.200" cy="530" rx="19.500" ry="10.500" fill="#2b1c1c"/><ellipse cx="1219" cy="549" rx="6" ry="10" fill="url(#glow)" opacity=".6"/><ellipse cx="1652.1" cy="443.0" rx="65.5" ry="26.5" fill="#151d2e" /><ellipse cx="1649.7" cy="441.8" rx="53.4" ry="21.7" fill="#090c13" /><path d="M1634.0 439.4V455.8A30.1 11.1 0 0 0 1694.2 455.8V439.4Z" fill="#18171b"/><ellipse cx="1649.7" cy="437.5" rx="41.6" ry="13.7" fill="#76828a" /><ellipse cx="1649.7" cy="434.8" rx="41.2" ry="12.8" fill="#b7c1c6" /><ellipse cx="1646.1" cy="432.2" rx="28.9" ry="8.2" fill="#c9d2d6" opacity=".7"/><path d="M1672.5 432.2 1697.8 432.2 1708.6 435.1 1707.4 439.9 1679.8 444.2Z" fill="#aab4ba"/><ellipse cx="1696.6" cy="430.8" rx="12.0" ry="6.5" fill="#111216" /><ellipse cx="1696.6" cy="427.4" rx="12.0" ry="6.5" fill="#25272f" /><path d="M1665.8 415.8V443.0" stroke="#15161a" stroke-width="3.600" stroke-linecap="round"/><path d="M1655.2 435.1Q1661.7 440.6 1665.8 432.2" stroke="#15161a" stroke-width="3.200" fill="none" stroke-linecap="round"/><rect x="1660.5" y="441.8" width="6" height="11.500" fill="#c0c8cc"/><path d="M1614.3 386.0 1623.9 381.2 1659.3 386.5 1660.0 400.4 1649.7 398.5 1649.2 394.2 1628.5 391.8 1629.2 423.1 1636.0 430.3 1616.2 427.9Z" fill="#c3cbca"/><path d="M1614.3 386.0 1623.9 381.2 1625.4 384.1 1617.7 388.4 1619.1 427.4 1616.2 427.9Z" fill="#e9edeb"/><path d="M1628.5 391.8 1649.2 394.2 1649.7 398.5 1634.0 396.6 1634.0 425.0 1629.2 423.1Z" fill="#8b9596"/><ellipse cx="1674.0" cy="387.9" rx="15.2" ry="16.4" fill="#99a5b2" /><ellipse cx="1675.4" cy="387.0" rx="12.0" ry="14.0" fill="#5d6874" /><ellipse cx="1669.7" cy="390.3" rx="14.2" ry="14.9" fill="#131418" /><ellipse cx="1667.7" cy="388.4" rx="9.6" ry="9.6" fill="#1f2127" /><path d="M1656.9 396.1 1670.1 400.9 1672.5 411.7 1662.9 416.6 1654.5 411.7Z" fill="#9aa6b4"/><ellipse cx="1653.8" cy="401.4" rx="10.6" ry="8.7" fill="#b4c0cc" /><ellipse cx="1651.8" cy="399.0" rx="5.3" ry="4.3" fill="#e4eaf0" /><path d="M1634.0 400.9 1648.5 396.1 1651.4 404.5 1636.4 408.1Z" fill="#c1cbd6"/><ellipse cx="1653.8" cy="389.4" rx="3.9" ry="5.3" fill="#cdd5dd" /><path d="M1649.0 405.2C1640.0 416.6 1634.0 429.8 1631.6 449.0C1629.7 465.9 1620.8 474.3 1605.2 480.8L1566.6 491.9" fill="none" stroke="#3a4250" stroke-width="9.800" stroke-linecap="round"/><path d="M1649.0 405.2C1640.0 416.6 1634.0 429.8 1631.6 449.0C1629.7 465.9 1620.8 474.3 1605.2 480.8L1566.6 491.9" fill="none" stroke="url(#arm)" stroke-width="7.800" stroke-linecap="round"/><path d="M1646.5 405.7C1638.1 416.6 1631.6 429.8 1629.5 449.5" fill="none" stroke="#e2ebf5" stroke-width="2.200" stroke-linecap="round" opacity=".85"/><path d="M1614.8 477.2L1605.2 480.8L1567.8 491.6" fill="none" stroke="#50555d" stroke-width="7.200" stroke-linecap="round"/><path d="M1613.8 475.5L1581.1 485.2" fill="none" stroke="#7c838c" stroke-width="1.600" stroke-linecap="round"/><path d="M1575.3 485.2L1592.2 498.9" stroke="#2a5cc8" stroke-width="3.400" stroke-linecap="round"/><path d="M1556.5 489.5 1564.7 501.5 1513.7 528.5 1507.0 530.4 1509.4 526.1Z" fill="#1b48a6"/><path d="M1556.5 489.5 1560.4 494.8 1509.8 527.0 1509.4 526.1Z" fill="#2f66d2"/><ellipse cx="1563.0" cy="496.0" rx="3.600" ry="6.800" fill="#c6ced8" transform="rotate(-28 1563.0 496.0)"/><ellipse cx="1514.4" cy="521.7" rx="2" ry="1.300" fill="#ff7a30"/><path d="M1694.500 488H1737L1788.500 579H1742Z" fill="#c8ccd0"/><path d="M1697 489.500H1735.500L1786 577.800H1743.500Z" fill="url(#pitch)"/><path d="M1710.500 489.200H1735.800L1737.500 492.300H1712.300Z" fill="#cfc8b8"/><path d="M1724 494 1772 576" stroke="#1e2530" stroke-width="3.500"/><path d="M1727.500 494 1775.500 576" stroke="#dce8f6" stroke-width="1.500" opacity=".8"/><path d="M1709 494.500 1752 574" stroke="#5a6a80" stroke-width="1" stroke-dasharray="1.500 8"/><rect x="1720.500" y="527.500" width="8" height="3" fill="#c8e88a"/><rect x="1733.500" y="517.500" width="27.500" height="20.500" rx="2" fill="url(#knobv)"/><text x="1591.500" y="598.300" font-family="Liberation Serif,serif" font-size="8.800" font-weight="700" fill="#1c2740" textLength="48.500" lengthAdjust="spacingAndGlyphs">Technix</text><text x="1655" y="598.300" font-family="Liberation Sans,sans-serif" font-size="5.500" fill="#2a3650" textLength="31" lengthAdjust="spacingAndGlyphs">Quartz</text><text x="1592.500" y="603.800" font-family="Liberation Sans,sans-serif" font-size="4.200" fill="#34405a" textLength="141.500" lengthAdjust="spacingAndGlyphs">Direct Drive Turntable System   SL-1200/VR3</text></svg>
<div class="a" style="left:0px;top:999px;width:1920px;height:28.5px;background:#181818;"></div>
<div class="a" style="left:0px;top:999px;width:1920px;height:1px;background:#2b2b2b;"></div>
<div class="a" style="left:0px;top:1000px;width:45px;height:27.5px;background:#0078d4;"></div>
<svg class="a" style="left:15.5px;top:1005px" width="15" height="15" viewBox="0 0 15 15" ><path d="M1.500 6 6.500 10.500 1.500 15M13.500 0 8.500 4.500 13.500 9" fill="none" stroke="#ffffff" stroke-width="1.400" transform="translate(0,-.5)"/></svg>
<svg class="a" style="left:54px;top:1003px" width="15" height="20" viewBox="0 0 15 20" ><circle cx="3.500" cy="3.500" r="2.300" fill="none" stroke="#cccccc" stroke-width="1.300"/><circle cx="3.500" cy="16.500" r="2.300" fill="none" stroke="#cccccc" stroke-width="1.300"/><circle cx="11.500" cy="6.500" r="2.300" fill="none" stroke="#cccccc" stroke-width="1.300"/><path d="M3.500 6V14M11.500 9q0 3-3.500 3.500T3.500 14" fill="none" stroke="#cccccc" stroke-width="1.300"/></svg>
<svg class="a" style="left:123.5px;top:1004.5px" width="19" height="18" viewBox="0 0 19 18" ><path d="M3.300 7.500A6.300 6.300 0 0 1 15 5.500M15.700 10.500A6.300 6.300 0 0 1 4 12.500" fill="none" stroke="#cccccc" stroke-width="1.400"/><path d="M11.500 5.800H15.500V1.800M7.500 12.200H3.500V16.200" fill="none" stroke="#cccccc" stroke-width="1.400"/></svg>
<svg class="a" style="left:161.5px;top:1005.5px" width="17" height="17" viewBox="0 0 17 17" ><circle cx="8.500" cy="8.500" r="7.600" fill="none" stroke="#cccccc" stroke-width="1.300"/><path d="M5.500 5.500 11.500 11.500M11.500 5.500 5.500 11.500" stroke="#cccccc" stroke-width="1.300"/></svg>
<svg class="a" style="left:197px;top:1005px" width="17" height="16" viewBox="0 0 17 16" ><path d="M8.500 1.200 16 15H1Z" fill="none" stroke="#cccccc" stroke-width="1.300" stroke-linejoin="round"/><path d="M8.500 6V10.500M8.500 11.800V13.300" stroke="#cccccc" stroke-width="1.400"/></svg>
<svg class="a" style="left:232.3px;top:1005.5px" width="17" height="17" viewBox="0 0 17 17" ><circle cx="8.500" cy="8.500" r="7.600" fill="none" stroke="#cccccc" stroke-width="1.300"/><path d="M8.500 7.500V12.500M8.500 4.500V6" stroke="#cccccc" stroke-width="1.500"/></svg>
<svg class="a" style="left:286px;top:1004.5px" width="14" height="18" viewBox="0 0 14 18" ><path d="M6.500 1C8 4 12.500 6.500 12.500 11.500A5.500 5.500 0 0 1 1.500 11.500C1.500 9 3 7.500 4 6C4.500 8 5.500 8.500 6 8.500C7 6.500 7 3.500 6.500 1Z" fill="none" stroke="#cccccc" stroke-width="1.300" stroke-linejoin="round"/><path d="M7 16.500C5.500 16.500 4.800 15.300 4.800 14.200C4.800 12.500 6.500 12 7 10.500C8 11.500 9.200 12.700 9.200 14.200C9.200 15.300 8.500 16.500 7 16.500Z" fill="none" stroke="#cccccc" stroke-width="1.200"/></svg>
<svg class="a" style="left:323.5px;top:1006px" width="18" height="15" viewBox="0 0 18 15" ><path d="M.7 14.300V.7H7.500L9 3H17.300V14.300Z" fill="none" stroke="#cccccc" stroke-width="1.300"/><path d="M.7 5.500H7.500L9 3" fill="none" stroke="#cccccc" stroke-width="1.300"/></svg>
<svg class="a" style="left:488px;top:1006px" width="18" height="15" viewBox="0 0 18 15" ><path d="M.7 14.300V.7H7.500L9 3H17.300V14.300Z" fill="none" stroke="#cccccc" stroke-width="1.300"/><path d="M.7 5.500H7.500L9 3" fill="none" stroke="#cccccc" stroke-width="1.300"/></svg>
<svg class="a" style="left:1884px;top:1004px" width="17" height="19" viewBox="0 0 17 19" ><path d="M2 14.500C3.500 13 3.500 11.500 3.500 8.500A5 5 0 0 1 13.500 8.500C13.500 11.500 13.500 13 15 14.500Z" fill="none" stroke="#cccccc" stroke-width="1.300" stroke-linejoin="round"/><path d="M6.500 16.500A2 2 0 0 0 10.500 16.500" fill="none" stroke="#cccccc" stroke-width="1.300"/><circle cx="13" cy="4.200" r="3.400" fill="#cccccc" stroke="#181818" stroke-width=".8"/></svg>
<div class="a" style="left:0;top:1027.300px;width:1920px;height:53px;background:linear-gradient(90deg,#233047 0%,#243148 16%,#2a294f 20%,#2e2758 26%,#2d2756 35%,#28294f 42%,#232d4b 50%,#212a49 72%,#1f2848 88%,#202848 96%,#25294d 100%)"></div>
<div class="a" style="left:654.2px;top:1027.3px;width:64px;height:53px;background:#4f4d72;"></div>
<div class="a" style="left:72px;top:1076.8px;width:53px;height:3.3px;background:#76b9ed;"></div>
<div class="a" style="left:137px;top:1076.8px;width:53.5px;height:3.3px;background:#76b9ed;"></div>
<div class="a" style="left:202px;top:1076.8px;width:53.80000000000001px;height:3.3px;background:#76b9ed;"></div>
<div class="a" style="left:333px;top:1076.8px;width:53px;height:3.3px;background:#76b9ed;"></div>
<div class="a" style="left:654.2px;top:1076.8px;width:64px;height:3.3px;background:#76b9ed;"></div>
<svg class="a" style="left:21.8px;top:1044.5px" width="19.6" height="19" viewBox="0 0 19.600 19" ><path d="M0 2.700 8 1.600V9H0ZM9 1.450 19.600 0V9H9ZM0 10H8V17.400L0 16.300ZM9 10H19.600V19L9 17.550Z" fill="#ffffff"/></svg>
<svg class="a" style="left:83.5px;top:1041.5px" width="29.5" height="23.5" viewBox="0 0 29.500 23.500" ><path d="M1.500 0H9.500L12 2.500H28Q29.500 2.500 29.500 4V22Q29.500 23.500 28 23.500H1.500Q0 23.500 0 22V1.500Q0 0 1.500 0Z" fill="#e9a825"/><path d="M0 6Q0 4.500 1.500 4.500H28Q29.500 4.500 29.500 6V22Q29.500 23.500 28 23.500H1.500Q0 23.500 0 22Z" fill="#f9d262"/><path d="M5.500 23.500V15.500Q5.500 14 7 14H22.500Q24 14 24 15.500V23.500Z" fill="#3f8fdd"/><path d="M9 23.500V18.500H20.500V23.500Z" fill="#f9d262"/></svg>
<svg class="a" style="left:149.4px;top:1038.3px" width="28" height="30" viewBox="0 0 28 30" ><defs><linearGradient id="ffg" x1=".75" y1=".05" x2=".3" y2="1"><stop offset="0" stop-color="#fff44f"/><stop offset=".3" stop-color="#ffbd2e"/><stop offset=".55" stop-color="#ff7a1a"/><stop offset=".8" stop-color="#ff3647"/><stop offset="1" stop-color="#e31587"/></linearGradient><radialGradient id="ffp" cx="40%" cy="30%" r="70%"><stop offset="0" stop-color="#b04cff"/><stop offset="1" stop-color="#5a34d8"/></radialGradient></defs><path d="M18.300 .4C20.500 3 22 4 23.800 6.200 25 7.300 25.200 6.500 25.300 5.800 27.200 9 27.800 12.500 27.600 16.500A13.500 13.500 0 0 1 .6 17C.3 13.500 1.200 10.500 2.600 8.300 3.200 7 4 6 4.800 5.300 4.900 6.500 5.300 7.300 6 7.800 6.500 6.800 7.300 6.200 8.200 5.800 8.400 7 9.200 8 10.300 8.500 11.800 8.200 13 7.500 13.800 6.500 13.500 4.500 15.500 1.800 18.300 .400Z" fill="url(#ffg)"/><circle cx="14.300" cy="17" r="5.800" fill="url(#ffp)"/><path d="M5 12.500C7.500 11 10.500 11.200 13.200 13 11.500 13.300 10 14.500 9.200 16.500 7.800 15 6 14 5 12.500Z" fill="#ff9a1f"/><path d="M11.500 10.800C14 9.800 17.500 10.300 19.300 12.200 17.800 12 16.500 12.200 15.500 12.800Z" fill="#a040f0"/></svg>
<svg class="a" style="left:212.8px;top:1038.5px" width="32" height="31.5" viewBox="0 0 32 31.500" ><defs><linearGradient id="tbg" x1=".2" y1="0" x2=".7" y2="1"><stop offset="0" stop-color="#2a8af0"/><stop offset=".5" stop-color="#1471dc"/><stop offset="1" stop-color="#0a4cb0"/></linearGradient></defs><path d="M6.300 3.800C8 6 8.500 8 8.200 10.500 10 5.500 14 2 19 .8 22.500 .100 26 .500 29.300 1.300 28.500 2 28.200 2.500 28.500 3.200 29 3.500 29.500 4 29.700 4.800 28.800 4.800 28.300 5.200 28.300 5.800 30.500 9 31.500 12.500 31.200 16.500A15.300 15.300 0 0 1 .7 17.500C.3 14 1.200 11 2.500 9 2.800 10.500 3.300 11.500 4.200 12 4 9 4.800 6 6.300 3.800Z" fill="url(#tbg)"/><path d="M11.500 8.500C14 4.500 18.500 3 22.500 3.500 20 4.500 18.500 6 17.800 8Z" fill="#7a6ee0" opacity=".7"/><ellipse cx="16.600" cy="16.500" rx="8" ry="6.600" fill="#e6eeff"/><path d="M9.300 14.200 16.600 19.500 23.800 14.200" fill="none" stroke="#b8cdf5" stroke-width="1.300"/><path d="M4.500 16C5 21 9 25 14 25.500 11 24 9.500 21.500 9.500 19Z" fill="#3f8ff0" opacity=".7"/><circle cx="18.200" cy="3.800" r=".8" fill="#fff"/></svg>
<svg class="a" style="left:279.5px;top:1040.4px" width="29" height="26" viewBox="0 0 29 26" ><path d="M3 8 1.500 5 4.500 2.500 7 4.500Q9 3.500 11 3L11.500 0H17.500L18 3Q20 3.500 22 4.500L24.500 2.500 27.500 5 26 8Q28.500 11 28.500 15V21Q24 26 14.500 26T.5 21V15Q.5 11 3 8Z" fill="#478cbf"/><circle cx="8.700" cy="14.300" r="3.200" fill="#fff"/><circle cx="20.300" cy="14.300" r="3.200" fill="#fff"/><circle cx="9" cy="14.500" r="1.700" fill="#414042"/><circle cx="20" cy="14.500" r="1.700" fill="#414042"/><rect x="13.600" y="12.500" width="1.800" height="4.500" rx=".9" fill="#fff"/><path d="M.5 18H5V21.500H8.500V19H12.500V22H16.500V19H20.500V21.500H24V18H28.500" fill="none" stroke="#fff" stroke-width="1.600"/></svg>
<svg class="a" style="left:343.3px;top:1037.7px" width="31.7" height="31.9" viewBox="0 0 100 100" ><path fill-rule="evenodd" fill="#2196e8" d="M96.500 10.800 75.900.9C73.500-.3 70.700.2 68.800 2.100L29.400 38 12.200 25c-1.600-1.200-3.800-1.100-5.300.2l-5.500 5c-1.800 1.700-1.800 4.500 0 6.200L16.300 50 1.400 63.600c-1.800 1.700-1.800 4.500 0 6.200l5.500 5c1.500 1.300 3.700 1.400 5.300.2L29.400 62l39.400 35.900c1.900 1.900 4.700 2.400 7.100 1.200l20.600-9.900c2.100-1 3.500-3.200 3.500-5.600V16.400c0-2.400-1.400-4.600-3.500-5.600ZM75 72.700 45.100 50 75 27.300Z"/><path fill="#1a7fd0" d="M1.400 36.400 16.300 50 1.400 63.600c-1.800 1.700-1.800 4.500 0 6.200l5.500 5c1.500 1.300 3.700 1.400 5.300.2L75 27.300V.5c-2.200-.4-4.500.1-6.200 1.600Z" opacity=".5"/><path fill="#35a9f5" d="M75 .5V99.500c.3-.1.600-.2.900-.4l20.600-9.900c2.100-1 3.500-3.200 3.500-5.600V16.400c0-2.400-1.400-4.600-3.500-5.600L75.900.9C75.600.7 75.300.6 75 .5Z"/></svg>
<svg class="a" style="left:408.7px;top:1037.7px" width="31.7" height="31.9" viewBox="0 0 31.700 31.900" ><defs><linearGradient id="bbg" x1="0" y1="0" x2="0" y2="1"><stop offset="0" stop-color="#1fa3ec"/><stop offset="1" stop-color="#2a7fd0"/></linearGradient></defs><rect width="31.700" height="31.900" rx="2.500" fill="url(#bbg)"/><path d="M4 5.500 22 7.500 29 28 9 26.500Z" fill="#24539e" opacity=".85"/></svg>
<svg class="a" style="left:474px;top:1037.7px" width="31.7" height="31.9" viewBox="0 0 31.700 31.900" ><rect width="31.700" height="31.900" rx="2" fill="#424242"/><path d="M8 8.500 11 6.500 19 13 16.500 15.500Z" fill="#9adfe0"/><path d="M5.500 22 16 13.500 24.500 13 26 16.500 17 18 8.500 25Z" fill="#1fd6d8"/></svg>
<svg class="a" style="left:539px;top:1040.5px" width="31" height="26" viewBox="0 0 31 26" ><path d="M16.500 2.500 22.500 7M6 8.300H18M2 17.500 11.500 10" stroke="#f5820c" stroke-width="3" stroke-linecap="round" fill="none"/><ellipse cx="20.300" cy="16.300" rx="10.200" ry="9.200" fill="#f5820c"/><ellipse cx="20.300" cy="15.800" rx="6" ry="5.600" fill="#ffffff"/><ellipse cx="20.500" cy="15.800" rx="3.500" ry="3.400" fill="#235fa0"/></svg>
<div class="a" style="left:607.500px;top:1041px;width:25px;height:25px;border-radius:50%;background:radial-gradient(circle at 50% 50%,rgba(255,255,255,.6) 0,rgba(255,255,255,0) 62%),conic-gradient(from 0deg,#ff30f0 0deg,#ff58c0 60deg,#ff9a60 100deg,#fff020 130deg,#80ff40 165deg,#20ff90 195deg,#20f0f0 228deg,#60a0ff 262deg,#b080ff 300deg,#ff30f0 360deg)"></div>
<svg class="a" style="left:604.5px;top:1040px" width="30" height="30" viewBox="0 0 30 30" ><path d="M1.300 1.700 16 12.700" stroke="#3c3a40" stroke-width="2.800" stroke-linecap="round"/><path d="M16 12.700 18.800 15" stroke="#c8c8d2" stroke-width="2.600"/><path d="M18.500 14.800C20 14.200 21.500 15.500 21.800 17.500 22 19.500 21 20.800 20 20.200 19 19.600 17.500 16.500 18.500 14.800Z" fill="#26222a"/></svg>
<svg class="a" style="left:669.5px;top:1038px" width="32" height="32" viewBox="0 0 32 32" ><circle cx="16" cy="16" r="15" fill="#101014" stroke="#f2f2f2" stroke-width="1.700"/><path d="M16 16 6 8A13 13 0 0 1 12 3.500Z" fill="#2c2c34"/><path d="M16 16 26 24A13 13 0 0 1 20 28.500Z" fill="#2c2c34"/><circle cx="16" cy="16" r="5.200" fill="#4ea8f2"/></svg>
<span class="t" style="left:56.20px;top:14.91px;font-size:17px;color:#cccccc;letter-spacing:-0.277px;">File</span>
<span class="t" style="left:102.80px;top:14.91px;font-size:17px;color:#cccccc;letter-spacing:0.026px;">Edit</span>
<span class="t" style="left:152.20px;top:14.91px;font-size:17px;color:#cccccc;letter-spacing:-0.104px;">Selection</span>
<span class="t" style="left:241.80px;top:14.91px;font-size:17px;color:#cccccc;letter-spacing:-0.037px;">View</span>
<span class="t" style="left:298.50px;top:14.91px;font-size:17px;color:#cccccc;letter-spacing:0.006px;">Go</span>
<span class="t" style="left:341.80px;top:14.91px;font-size:17px;color:#cccccc;letter-spacing:-0.496px;">Run</span>
<span class="t" style="left:391.80px;top:14.91px;font-size:17px;color:#cccccc;letter-spacing:-0.031px;">Terminal</span>
<span class="t" style="left:476.50px;top:14.91px;font-size:17px;color:#cccccc;letter-spacing:0.183px;">Help</span>
<span class="t" style="left:959.50px;top:14.91px;font-size:17px;color:#c0c0c0;letter-spacing:-0.506px;">Vinyl-Desktop</span>
<span class="t" style="left:89.30px;top:62.33px;font-size:14.5px;color:#cccccc;letter-spacing:-1.406px;">SEARCH</span>
<span class="t" style="left:97.50px;top:108.91px;font-size:17px;color:#cccccc;letter-spacing:-0.314px;">Client_03</span>
<span class="t" style="left:329.00px;top:108.73px;font-size:14.5px;color:#cccccc;letter-spacing:-0.375px;">Aa</span>
<span class="t" style="left:357.50px;top:108.23px;font-size:14.5px;color:#cccccc;letter-spacing:0.680px;">ab</span>
<span class="t" style="left:92.80px;top:156.21px;font-size:17px;color:#9d9d9d;letter-spacing:0.050px;">1 result in 1 file - </span>
<span class="t" style="left:222.80px;top:156.21px;font-size:17px;color:#3794ff;letter-spacing:0.229px;">Open in editor</span>
<span class="t" style="left:131.20px;top:192.21px;font-size:17px;color:#73c991;letter-spacing:-0.419px;">Clients.cs</span>
<span class="t" style="left:355.50px;top:192.18px;font-size:15.5px;color:#73c991;">U</span>
<span class="t" style="left:112.80px;top:221.61px;font-size:17px;color:#cccccc;letter-spacing:-0.162px;">public class </span>
<span class="t" style="left:203.30px;top:221.61px;font-size:17px;color:#e8e0d8;letter-spacing:-0.314px;">Client_03</span>
<span class="t" style="left:272.30px;top:221.61px;font-size:17px;color:#cccccc;letter-spacing:-0.186px;"> : IClient</span>
<span class="t" style="left:469.50px;top:61.81px;font-size:17px;color:#73c991;letter-spacing:-0.369px;">Clients.cs</span>
<span class="t" style="left:546.20px;top:62.08px;font-size:15.5px;color:#73c991;">U</span>
<span class="t" style="left:477.20px;top:98.91px;font-size:17px;color:#a9a9a9;letter-spacing:-0.369px;">Clients.cs</span>
<span class="t" style="left:569.50px;top:98.11px;font-size:17px;color:#cccccc;letter-spacing:3.070px;">{}</span>
<span class="t" style="left:592.80px;top:98.91px;font-size:17px;color:#a9a9a9;letter-spacing:-0.150px;">Testbed</span>
<span class="t" style="left:696.80px;top:98.91px;font-size:17px;color:#a9a9a9;letter-spacing:-0.027px;">IClient</span>
<span class="t" style="left:690.30px;top:866.92px;font-size:18.4px;color:#cccccc;letter-spacing:-0.090px;">Represents the standard input, output, and error streams for console applications. This class cannot be inherited.</span>
<span class="t" style="left:75.50px;top:1005.61px;font-size:17px;color:#cccccc;letter-spacing:-0.594px;">main*</span>
<span class="t" style="left:183.50px;top:1005.61px;font-size:17px;color:#cccccc;">0</span>
<span class="t" style="left:219.00px;top:1005.61px;font-size:17px;color:#cccccc;">0</span>
<span class="t" style="left:254.50px;top:1005.61px;font-size:17px;color:#cccccc;">2</span>
<span class="t" style="left:345.50px;top:1005.61px;font-size:17px;color:#cccccc;letter-spacing:-0.561px;">Vinyl-Desktop.sln</span>
<span class="t" style="left:510.00px;top:1005.61px;font-size:17px;color:#cccccc;letter-spacing:-0.520px;">Godot Project: ./</span>
<span class="t" style="left:1508.20px;top:1005.61px;font-size:17px;color:#cccccc;letter-spacing:-0.891px;">Ln 5, Col 10</span>
<span class="t" style="left:1610.50px;top:1005.61px;font-size:17px;color:#cccccc;letter-spacing:-1.101px;">Tab Size: 4</span>
<span class="t" style="left:1703.20px;top:1005.61px;font-size:17px;color:#cccccc;letter-spacing:-1.334px;">UTF-8</span>
<span class="t" style="left:1765.20px;top:1005.61px;font-size:17px;color:#cccccc;letter-spacing:-2.352px;">CRLF</span>
<span class="t" style="left:1819.50px;top:1005.11px;font-size:17px;color:#cccccc;letter-spacing:2.570px;">{}</span>
<span class="t" style="left:1844.00px;top:1005.61px;font-size:17px;color:#cccccc;letter-spacing:-1.117px;">C#</span>
<span class="t" style="left:416.80px;top:1043.50px;font-size:21.5px;color:#ffffff;font-weight:700;">B</span>
<span class="t" style="left:1854.30px;top:1034.20px;font-size:16.3px;color:#ffffff;letter-spacing:-0.850px;">17:48</span>
<span class="t" style="left:1833.30px;top:1059.00px;font-size:16.3px;color:#ffffff;letter-spacing:-0.178px;">01/11/2025</span>
</body></html>
